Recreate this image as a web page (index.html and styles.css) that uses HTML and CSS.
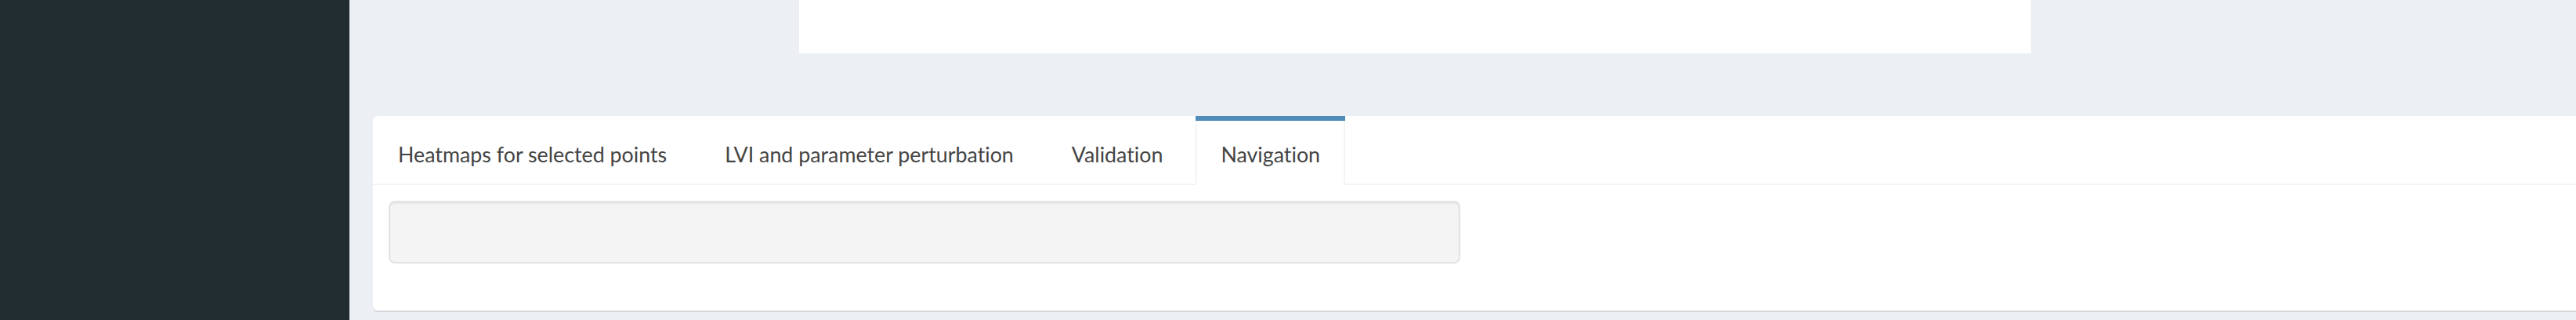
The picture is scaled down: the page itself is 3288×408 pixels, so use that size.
FILE: index.html
```html
<!DOCTYPE html>
<html lang="en">
<head>
<meta charset="utf-8">
<title>Dashboard</title>
<link rel="stylesheet" href="styles.css">
</head>
<body>
<div class="wrapper">
  <aside class="sidebar"></aside>
  <main class="content">
    <div class="top-box"></div>
    <section class="tab-box">
      <ul class="nav-tabs">
        <li class="tab"><a>Heatmaps for selected points</a></li>
        <li class="tab"><a>LVI and parameter perturbation</a></li>
        <li class="tab"><a>Validation</a></li>
        <li class="tab active"><a>Navigation</a></li>
      </ul>
      <div class="tab-content">
        <div class="well"></div>
      </div>
    </section>
  </main>
</div>
</body>
</html>
```

FILE: styles.css
```css
html, body {
  margin: 0;
  padding: 0;
  width: 3288px;
  height: 408px;
  overflow: hidden;
  background: #ecf0f5;
  font-family: "Lato", "Liberation Sans", sans-serif;
  color: #444;
}

.wrapper {
  display: flex;
  height: 408px;
}

.sidebar {
  width: 446px;
  flex: 0 0 446px;
  background: #222d32;
}

.content {
  flex: 1;
  padding-left: 30px;
  display: flex;
  flex-direction: column;
}

.top-box {
  margin-left: 544px;
  width: 1572px;
  height: 68px;
  background: #fff;
}

.tab-box {
  margin-top: 80px;
  height: 248px;
  background: #fff;
  border-radius: 6px 0 0 6px;
  box-shadow: 0 2px 0 rgba(0, 0, 0, 0.1);
  display: flex;
  flex-direction: column;
}

.nav-tabs {
  list-style: none;
  margin: 0;
  padding: 0;
  display: flex;
  border-bottom: 2px solid #f4f4f4;
}

.tab {
  margin-right: 10px;
  margin-bottom: -2px;
  border-top: 6px solid transparent;
}

.tab a {
  display: block;
  padding: 23px 30px 19px;
  border-left: 2px solid transparent;
  border-right: 2px solid transparent;
  font-size: 26.8px;
  line-height: 40px;
  font-variant-ligatures: none;
  font-feature-settings: "liga" 0;
  color: #444;
  white-space: nowrap;
}

.tab.active {
  border-top-color: #508cb9;
}

.tab.active a {
  background: #fff;
  border-left-color: #f4f4f4;
  border-right-color: #f4f4f4;
}

.tab-content {
  padding: 20px;
}

.well {
  width: 1364px;
  height: 76px;
  background: #f4f4f4;
  border: 2px solid #e3e3e3;
  border-radius: 8px;
  box-shadow: inset 0 2px 2px rgba(0, 0, 0, 0.05);
}
```
